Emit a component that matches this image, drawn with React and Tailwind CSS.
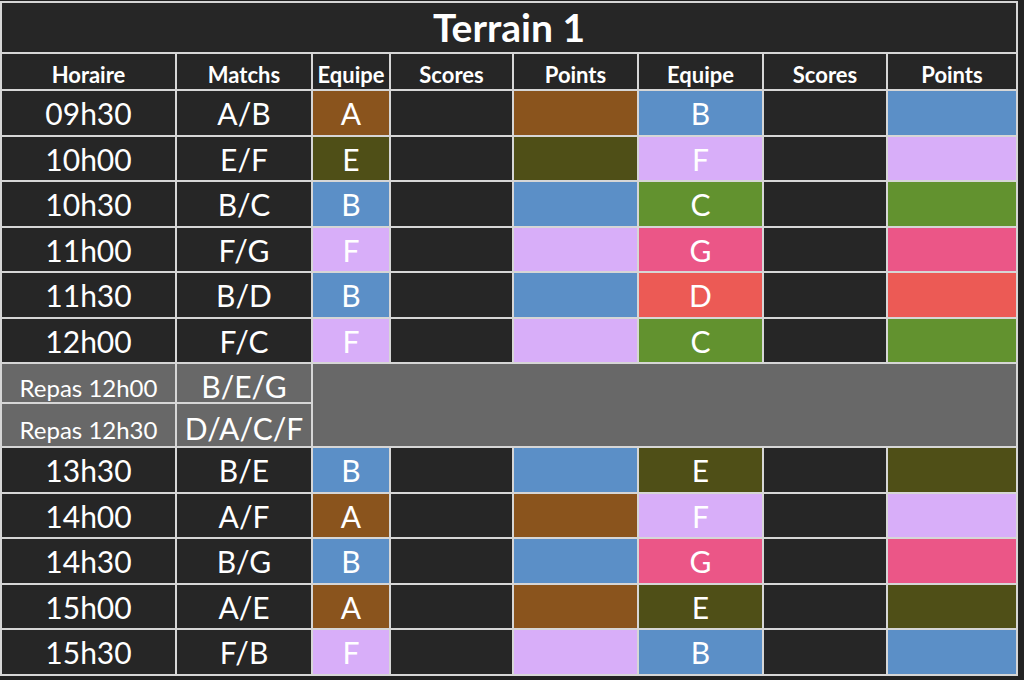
import React from 'react';

const couleurs = {
  A: 'bg-[#8a541d]',
  B: 'bg-[#5b8fc7]',
  C: 'bg-[#62922f]',
  D: 'bg-[#ec5a55]',
  E: 'bg-[#4f4f17]',
  F: 'bg-[#d8aef9]',
  G: 'bg-[#eb5687]',
};

const matin = [
  ['09h30', 'A/B', 'A', 'B'],
  ['10h00', 'E/F', 'E', 'F'],
  ['10h30', 'B/C', 'B', 'C'],
  ['11h00', 'F/G', 'F', 'G'],
  ['11h30', 'B/D', 'B', 'D'],
  ['12h00', 'F/C', 'F', 'C'],
];

const apresMidi = [
  ['13h30', 'B/E', 'B', 'E'],
  ['14h00', 'A/F', 'A', 'F'],
  ['14h30', 'B/G', 'B', 'G'],
  ['15h00', 'A/E', 'A', 'E'],
  ['15h30', 'F/B', 'F', 'B'],
];

const entetes = ['Horaire', 'Matchs', 'Equipe', 'Scores', 'Points', 'Equipe', 'Scores', 'Points'];

const Cell = ({ className = '', children }) => (
  <div className={`flex items-center justify-center text-white ${className}`}>{children}</div>
);

const Ligne = ({ horaire, match, eq1, eq2 }) => (
  <>
    <Cell className="bg-[#262626] text-[30px] pt-[2px]">{horaire}</Cell>
    <Cell className="bg-[#262626] text-[30px] pt-[2px]">{match}</Cell>
    <Cell className={`${couleurs[eq1]} text-[30px] pt-[2px]`}>{eq1}</Cell>
    <Cell className="bg-[#262626]" />
    <Cell className={couleurs[eq1]} />
    <Cell className={`${couleurs[eq2]} text-[30px] pt-[2px]`}>{eq2}</Cell>
    <Cell className="bg-[#262626]" />
    <Cell className={couleurs[eq2]} />
  </>
);

export default function App() {
  return (
    <div className="min-h-screen bg-[#222222] pt-[1px] font-[Lato,sans-serif]">
      <div className="grid w-[1018px] gap-[2px] p-[2px] bg-[#d6d6d6] grid-cols-[173px_134px_76px_121px_123px_123px_122px_128px] grid-rows-[49px_35px_repeat(6,43.5px)_38px_42px_repeat(5,43.5px)]">
        <Cell className="col-span-8 bg-[#262626] text-[39px] font-bold">Terrain 1</Cell>

        {entetes.map((e, i) => (
          <Cell key={i} className="bg-[#262626] text-[22px] font-bold pt-[5px]">{e}</Cell>
        ))}

        {matin.map(([h, m, a, b]) => (
          <Ligne key={h} horaire={h} match={m} eq1={a} eq2={b} />
        ))}

        <Cell className="bg-[#686868] text-[24px] pt-[10px]">Repas 12h00</Cell>
        <Cell className="bg-[#686868] text-[30px] pt-[6px]">B/E/G</Cell>
        <div className="col-span-6 row-span-2 bg-[#686868]" />
        <Cell className="bg-[#686868] text-[24px] pt-[10px]">Repas 12h30</Cell>
        <Cell className="bg-[#686868] text-[30px] pt-[6px]">D/A/C/F</Cell>

        {apresMidi.map(([h, m, a, b]) => (
          <Ligne key={h} horaire={h} match={m} eq1={a} eq2={b} />
        ))}
      </div>
    </div>
  );
}
